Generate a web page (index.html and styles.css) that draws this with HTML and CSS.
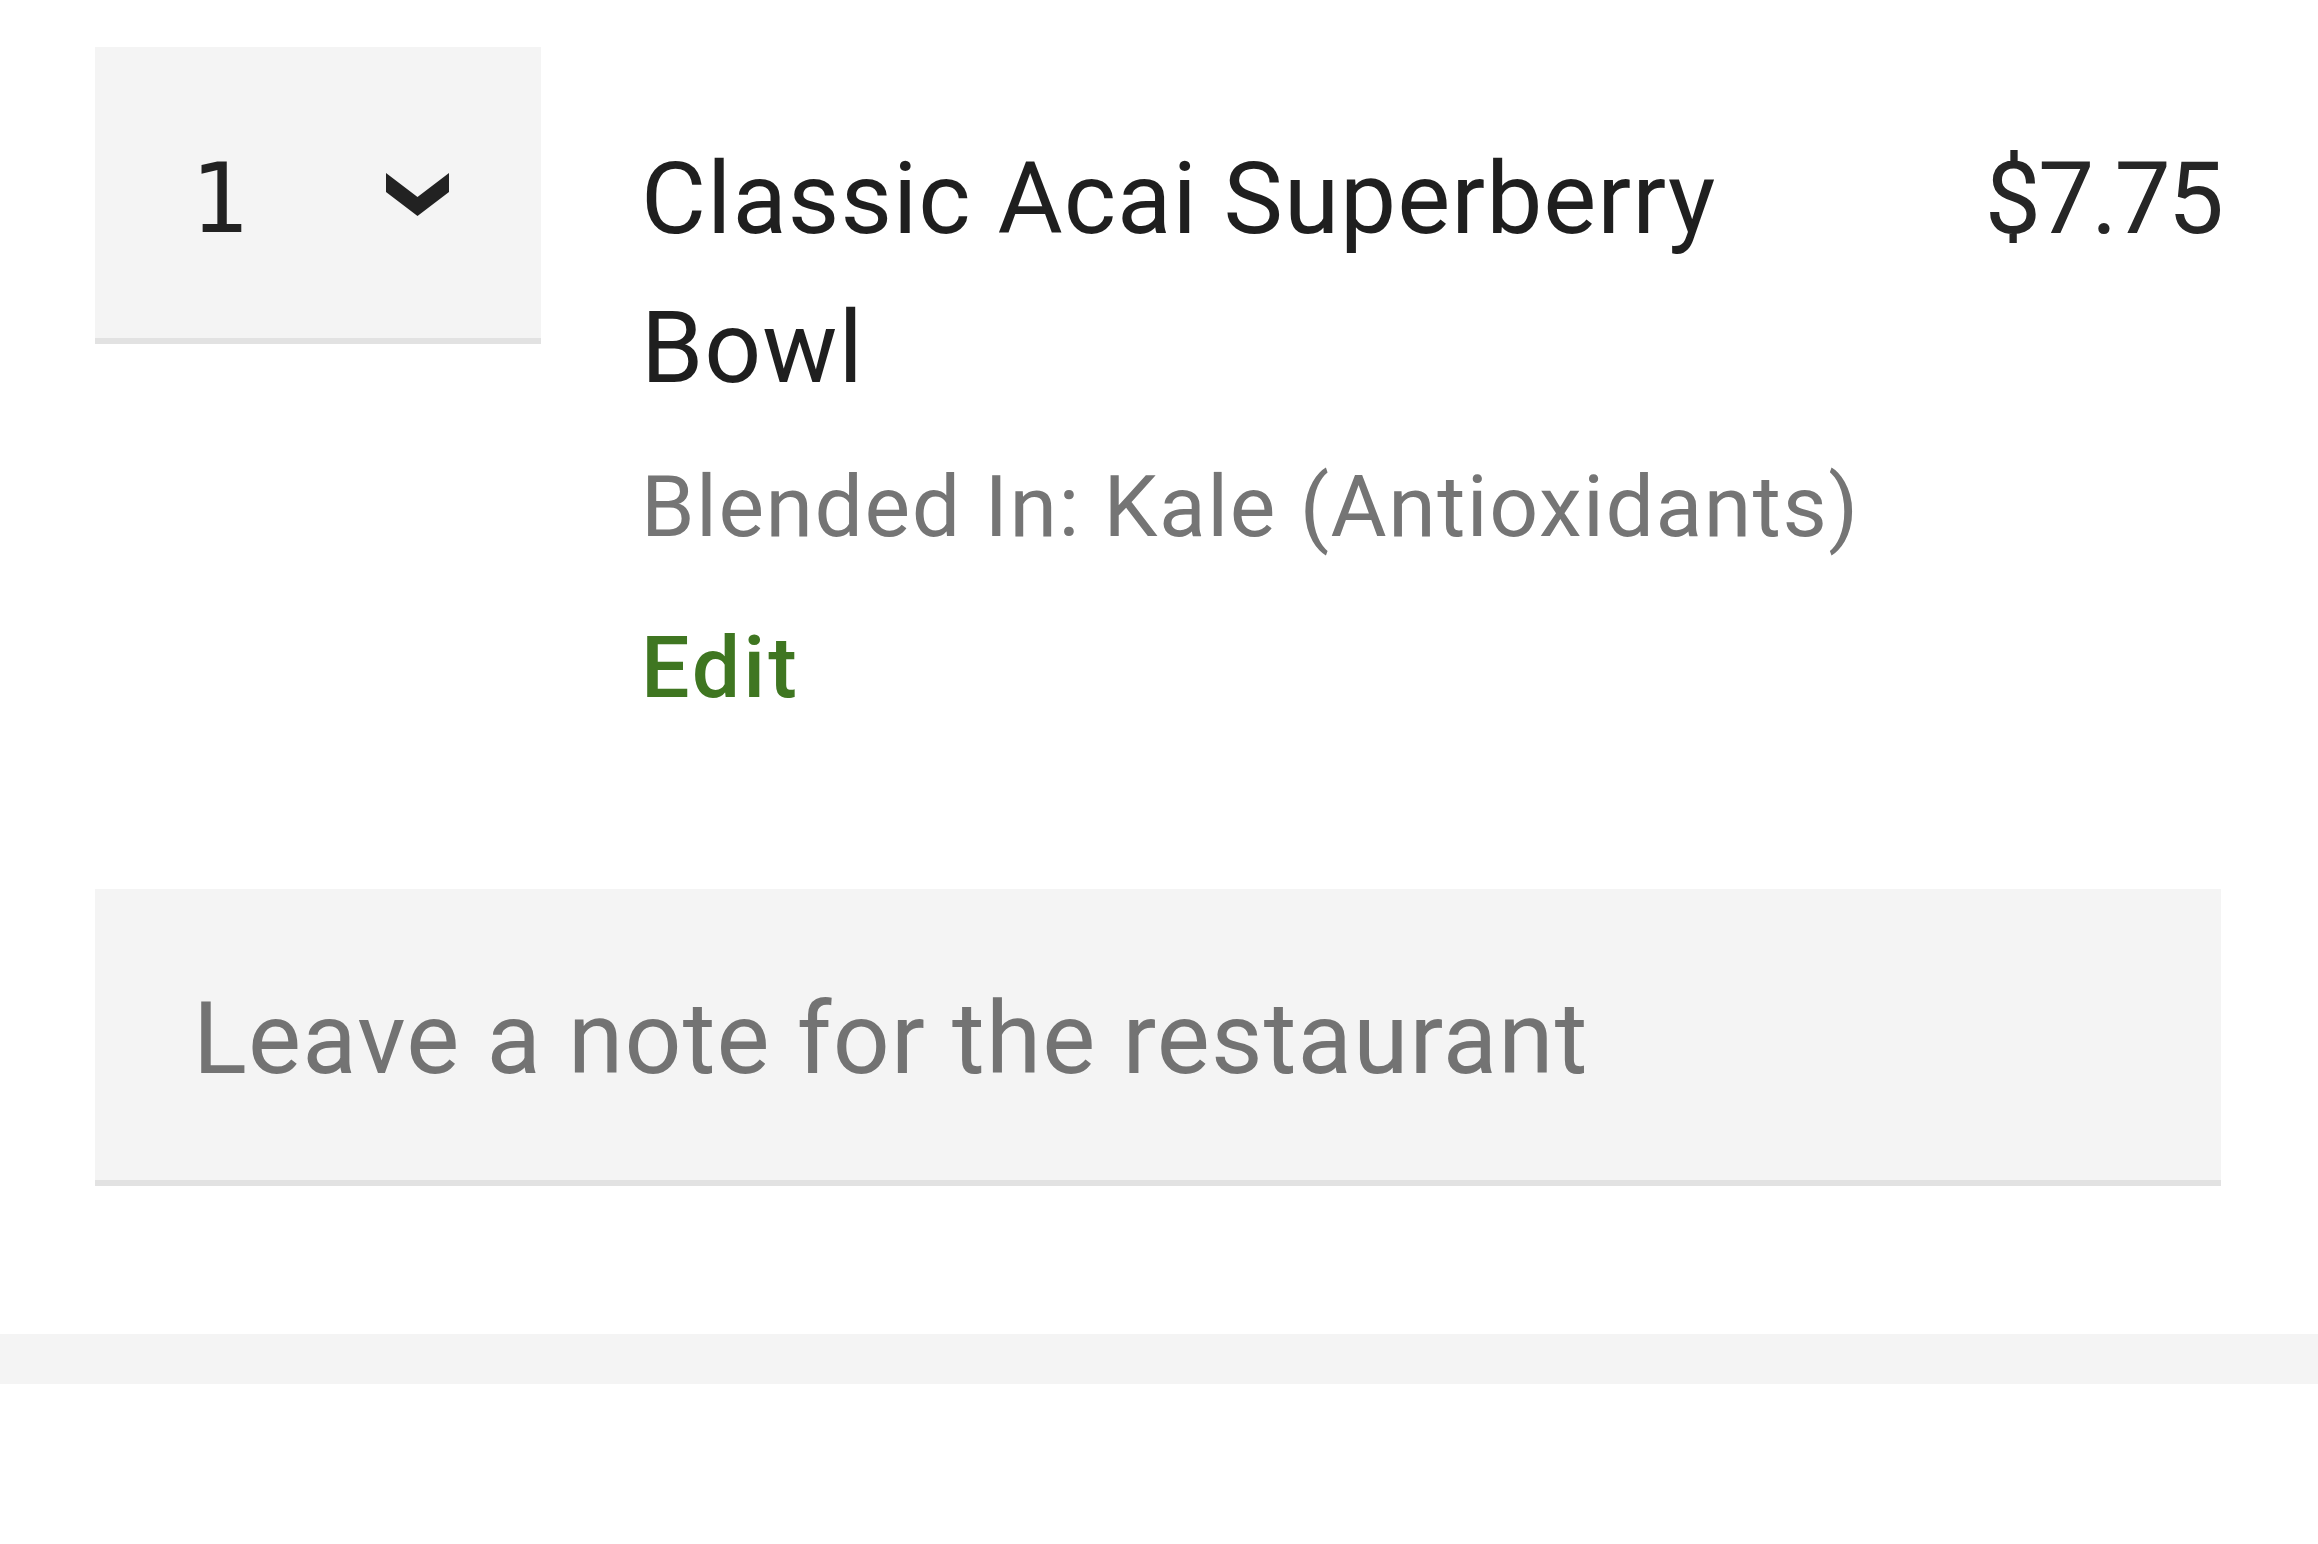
FILE: index.html
```html
<!DOCTYPE html>
<html lang="en">
<head>
<meta charset="utf-8">
<title>Cart item</title>
<link rel="stylesheet" href="styles.css">
</head>
<body>
<div class="page">
  <div class="item">
    <div class="qty">
      <span class="qty-value">1</span>
      <svg class="chevron" width="63" height="43" viewBox="0 0 63 43"><polygon points="0,0 31.5,24 63,0 63,19 31.5,43 0,19" fill="#222222"/></svg>
    </div>
    <div class="details">
      <div class="title">Classic Acai Superberry Bowl</div>
      <div class="options">Blended In: Kale (Antioxidants)</div>
      <div class="edit">Edit</div>
    </div>
    <div class="price">$7.75</div>
  </div>
  <div class="note">Leave a note for the restaurant</div>
</div>
<div class="band"></div>
</body>
</html>
```
FILE: styles.css
```css
html, body {
  margin: 0;
  padding: 0;
  background: #ffffff;
}
body {
  font-family: Roboto, "Noto Sans", sans-serif;
  color: #222222;
}
.page {
  padding: 47px 97px 148px 95px;
}
.item {
  display: flex;
  align-items: flex-start;
}
.qty {
  flex: 0 0 auto;
  width: 446px;
  height: 297px;
  box-sizing: border-box;
  background: #f4f4f4;
  border-bottom: 6px solid #e2e2e2;
  display: flex;
  align-items: center;
  justify-content: space-between;
  padding: 0 92px 0 95px;
}
.qty-value {
  font-family: "DejaVu Sans Mono", monospace;
  font-size: 96px;
  line-height: 1;
  color: #222222;
  margin-top: 12px;
}
.chevron {
  display: block;
  margin-top: 4px;
}
.details {
  flex: 0 0 1260px;
  margin-left: 100px;
  padding-top: 77px;
}
.title {
  font-size: 100px;
  line-height: 149px;
  color: #1f1f1f;
  letter-spacing: 1px;
}
.options {
  font-size: 86px;
  line-height: 129px;
  color: #757575;
  margin-top: 20px;
  white-space: nowrap;
  letter-spacing: 1.5px;
}
.edit {
  font-size: 86px;
  font-weight: 500;
  line-height: 129px;
  color: #3f7621;
  margin-top: 32px;
  letter-spacing: 3px;
}
.price {
  flex: 0 0 auto;
  margin-left: auto;
  font-size: 100px;
  line-height: 149px;
  padding-top: 77px;
  color: #262626;
  letter-spacing: -3px;
}
.note {
  margin-top: 157px;
  height: 297px;
  box-sizing: border-box;
  background: #f4f4f4;
  border-bottom: 6px solid #e2e2e2;
  display: flex;
  align-items: center;
  padding-left: 98px;
  padding-top: 8px;
  font-size: 100px;
  color: #737373;
  letter-spacing: 1.2px;
}
.band {
  height: 50px;
  background: #f4f4f4;
}
```
